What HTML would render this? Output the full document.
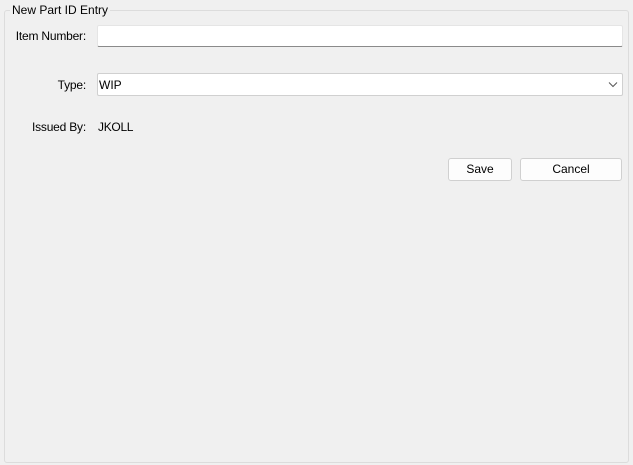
<!DOCTYPE html>
<html><head><meta charset="utf-8"><style>
html,body{margin:0;padding:0;width:633px;height:465px;background:#f0f0f0;overflow:hidden;font-family:"Segoe UI","Liberation Sans",sans-serif;font-size:12px;color:#000}
.a{position:absolute}
.box{left:4px;top:10px;width:623px;height:451px;border:1px solid #dcdcdc;border-radius:3px}
.legend{left:10px;top:3px;background:#f0f0f0;padding:0 2px;line-height:14px}
.lbl{line-height:16px}
.r{right:547px;text-align:right;white-space:nowrap;letter-spacing:-0.2px}
.inp{background:#fff;border:1px solid #e5e5e5;border-bottom:1px solid #8a8a8a;border-radius:2px;box-sizing:border-box}
.btn{background:#fdfdfd;border:1px solid #d0d0d0;border-radius:3px;box-sizing:border-box;text-align:center;line-height:21px}
</style></head><body>
<div class="a box"></div>
<div class="a legend">New Part ID Entry</div>
<div class="a lbl r" style="top:28px">Item Number:</div>
<div class="a inp" style="left:97px;top:25px;width:526px;height:22px"></div>
<div class="a lbl r" style="top:77px">Type:</div>
<div class="a inp" style="left:97px;top:73px;width:526px;height:23px;border:1px solid #d0d0d0"></div>
<div class="a lbl" style="left:99px;top:77px">WIP</div>
<svg class="a" style="left:608px;top:81px" width="10" height="7"><path d="M1 1.5 L5 5.5 L9 1.5" fill="none" stroke="#555" stroke-width="1"/></svg>
<div class="a lbl r" style="top:119px">Issued By:</div>
<div class="a lbl" style="left:98px;top:119px;letter-spacing:-0.3px">JKOLL</div>
<div class="a btn" style="left:448px;top:158px;width:64px;height:23px">Save</div>
<div class="a btn" style="left:520px;top:158px;width:102px;height:23px">Cancel</div>
</body></html>
